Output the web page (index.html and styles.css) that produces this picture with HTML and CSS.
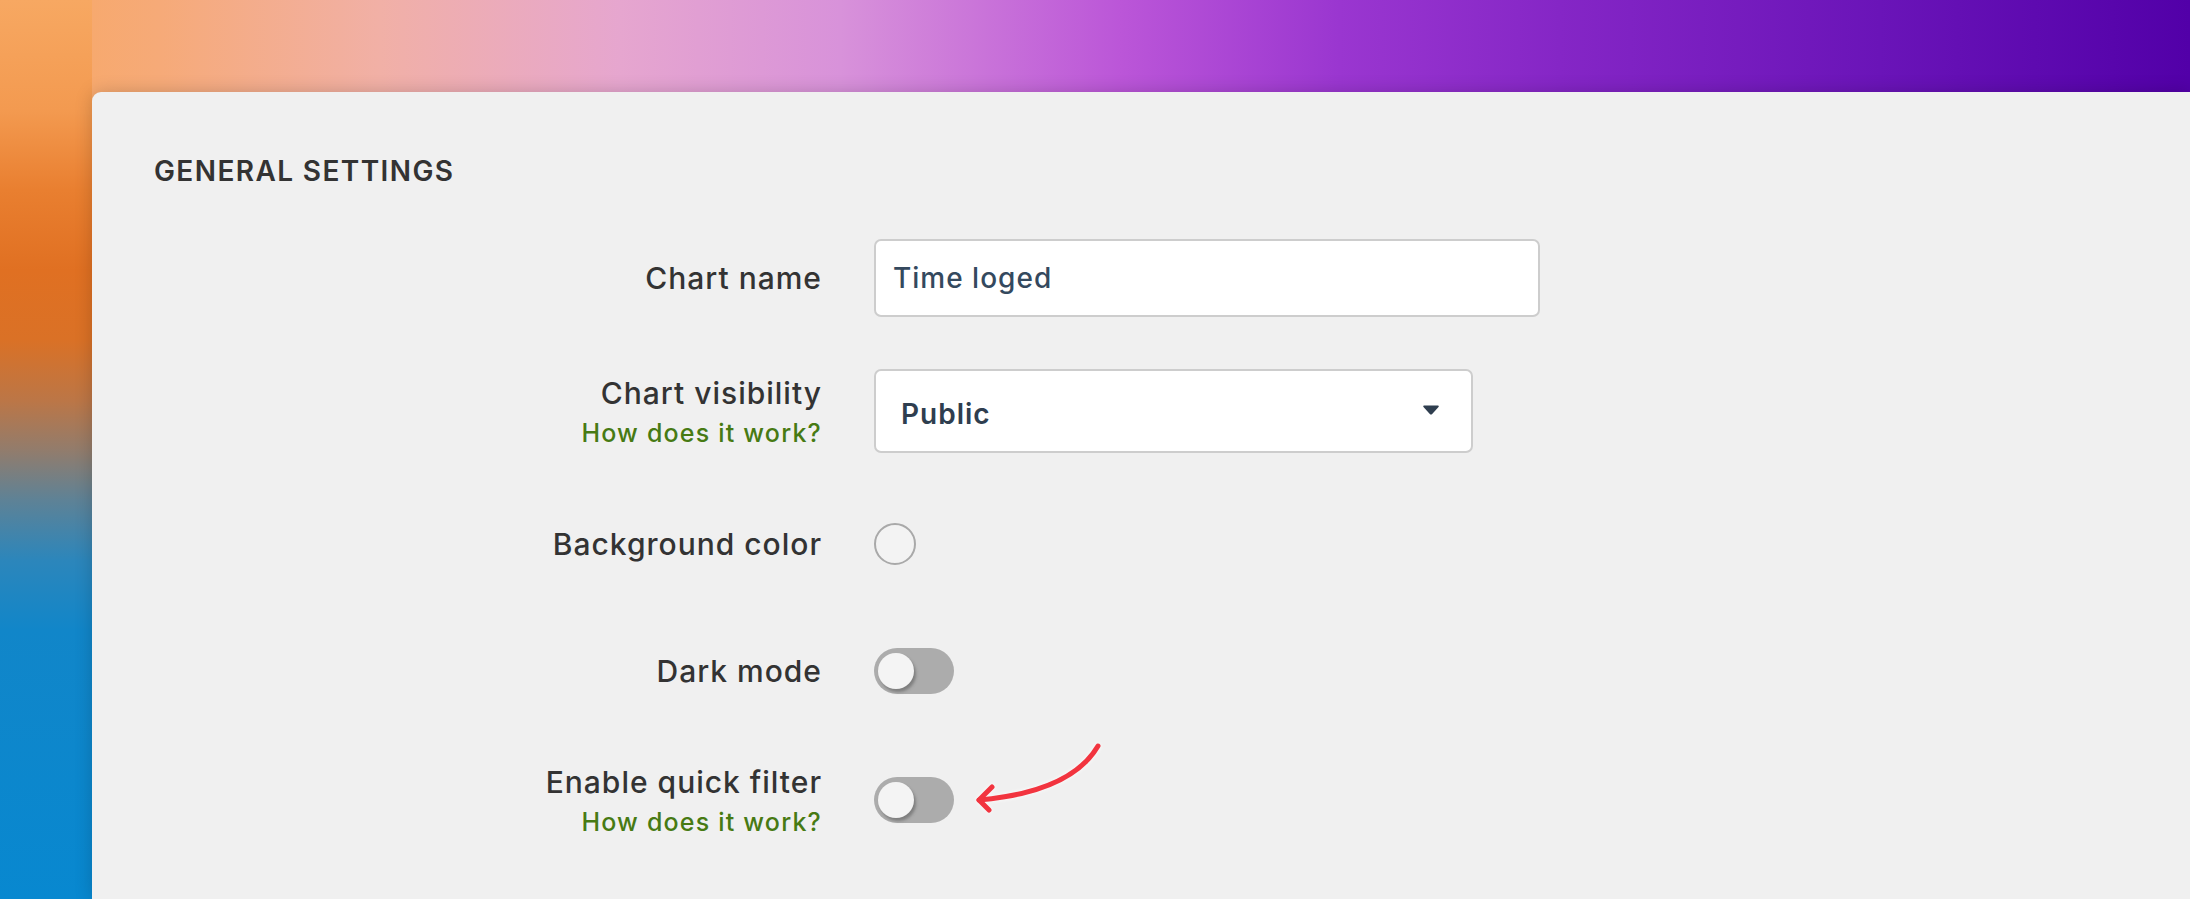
FILE: index.html
```html
<!DOCTYPE html>
<html lang="en">
<head>
<meta charset="utf-8">
<title>General settings</title>
<link rel="stylesheet" href="styles.css">
</head>
<body>
  <main class="panel">
    <h2 class="section-title">GENERAL SETTINGS</h2>
    <form class="form-grid">
      <div class="label-cell">
        <label class="field-label" for="chart-name">Chart name</label>
      </div>
      <div class="control-cell">
        <input id="chart-name" class="text-input" type="text" value="Time loged">
      </div>

      <div class="label-cell label-with-help">
        <span class="field-label">Chart visibility</span>
        <a class="help-link" href="#">How does it work?</a>
      </div>
      <div class="control-cell">
        <div class="select-box">
          <span class="select-value">Public</span>
          <svg class="caret" width="18" height="12" viewBox="0 0 18 12"><path d="M2 1.5 H16 Q17.5 1.5 16.5 3 L10.2 10 Q9 11.2 7.8 10 L1.5 3 Q0.5 1.5 2 1.5 Z" fill="#2f3e4f"/></svg>
        </div>
      </div>

      <div class="label-cell">
        <span class="field-label">Background color</span>
      </div>
      <div class="control-cell">
        <span class="color-swatch"></span>
      </div>

      <div class="label-cell">
        <span class="field-label">Dark mode</span>
      </div>
      <div class="control-cell">
        <span class="toggle"><span class="knob"></span></span>
      </div>

      <div class="label-cell label-with-help">
        <span class="field-label">Enable quick filter</span>
        <a class="help-link" href="#">How does it work?</a>
      </div>
      <div class="control-cell control-annotated">
        <span class="toggle"><span class="knob"></span></span>
        <svg class="annotation-arrow" width="132" height="74" viewBox="0 0 132 74">
          <path d="M125 4 Q 98 50 6 58" fill="none" stroke="#f2343f" stroke-width="5" stroke-linecap="round"/>
          <path d="M19 45 L6 58 L16 68" fill="none" stroke="#f2343f" stroke-width="5" stroke-linecap="round" stroke-linejoin="round"/>
        </svg>
      </div>
    </form>
  </main>
</body>
</html>
```
FILE: styles.css
```css
html, body {
  margin: 0;
  padding: 0;
}

body {
  width: 2190px;
  height: 899px;
  overflow: hidden;
  font-family: "Inter", "Noto Sans", sans-serif;
  background:
    linear-gradient(to bottom,
      #f7a862 0px,
      #f39a50 110px,
      #e97f30 190px,
      #e07022 270px,
      #da7126 340px,
      #bc7646 400px,
      #927c6c 450px,
      #5e8296 500px,
      #2c86bb 560px,
      #1186c9 630px,
      #0888d0 899px) left top / 92px 100% no-repeat,
    linear-gradient(to right,
      #f8a862 0px,
      #f6aa78 160px,
      #f1b0a6 380px,
      #e6a6cf 620px,
      #d892da 840px,
      #bb56d8 1120px,
      #9a36d0 1340px,
      #8526c6 1560px,
      #6a14b8 1880px,
      #5200a8 2190px);
}

.panel {
  margin: 92px 0 0 92px;
  height: 807px;
  box-sizing: border-box;
  padding: 62px 0 0 62px;
  background: #f0f0f0;
  border-top-left-radius: 9px;
  box-shadow: 0 0 18px rgba(0, 0, 0, 0.18);
}

.section-title {
  margin: 0 0 51px;
  font-size: 28px;
  line-height: 34px;
  font-weight: 600;
  letter-spacing: 1.4px;
  color: #333333;
}

.form-grid {
  display: grid;
  grid-template-columns: 668px auto;
  grid-template-rows: 78px 84px 78px 72px 82px;
  column-gap: 52px;
  row-gap: 52px;
  align-items: center;
}

.label-cell {
  display: flex;
  flex-direction: column;
  align-items: flex-end;
  text-align: right;
}

.label-with-help {
  padding-top: 4px;
}

.field-label {
  font-size: 30px;
  line-height: 40px;
  font-weight: 550;
  letter-spacing: 1px;
  color: #333333;
}

.help-link {
  font-size: 25px;
  line-height: 40px;
  font-weight: 500;
  letter-spacing: 1.2px;
  color: #477a13;
  text-decoration: none;
}

.control-cell {
  display: flex;
  align-items: center;
}

.control-annotated {
  position: relative;
}

.text-input {
  box-sizing: border-box;
  width: 666px;
  height: 78px;
  padding: 0 17px;
  border: 2px solid #cdcdcd;
  border-radius: 7px;
  background: #ffffff;
  font-family: "Inter", "Noto Sans", sans-serif;
  font-size: 28px;
  font-weight: 500;
  letter-spacing: 1px;
  color: #34495e;
  outline: none;
}

.select-box {
  box-sizing: border-box;
  width: 599px;
  height: 84px;
  padding: 5px 31px 0 25px;
  border: 2px solid #cdcdcd;
  border-radius: 7px;
  background: #ffffff;
  display: flex;
  align-items: center;
  justify-content: space-between;
}

.select-value {
  font-size: 28px;
  font-weight: 600;
  letter-spacing: 1px;
  color: #2f3e4f;
}

.caret {
  display: block;
  margin-top: -7px;
}

.color-swatch {
  box-sizing: border-box;
  width: 42px;
  height: 42px;
  border: 2px solid #a9a9a9;
  border-radius: 50%;
  background: #f3f3f3;
}

.toggle {
  width: 80px;
  height: 46px;
  border-radius: 23px;
  background: #acacac;
  display: flex;
  align-items: center;
  padding-left: 4px;
  box-sizing: border-box;
}

.knob {
  width: 36px;
  height: 36px;
  border-radius: 50%;
  background: #f4f4f4;
  box-shadow: 2px 3px 3px rgba(70, 70, 70, 0.45);
}

.annotation-arrow {
  position: absolute;
  left: 99px;
  top: -35px;
  overflow: visible;
  filter: drop-shadow(0 0 2px rgba(255, 255, 255, 0.9));
}
```
